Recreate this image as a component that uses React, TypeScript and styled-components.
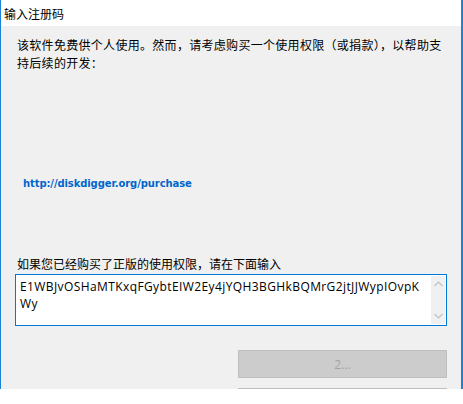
import React from "react";
import styled, { createGlobalStyle } from "styled-components";

const Global = createGlobalStyle`
  html, body { margin: 0; padding: 0; background: #ffffff; }
  body { font-family: "Noto Sans CJK SC", "Noto Sans", sans-serif; }
  * { box-sizing: border-box; }
`;

const Window = styled.div`
  width: 463px;
  height: 389px;
  border-left: 1px solid #1883d7;
  border-right: 2px solid #1883d7;
  display: flex;
  flex-direction: column;
  overflow: hidden;
  background: #f0f0f0;
`;

const TitleBar = styled.div`
  height: 26px;
  flex: none;
  background: #ffffff;
  display: flex;
  align-items: center;
  padding-left: 3px;
  font-size: 12px;
  color: #000000;
`;

const Body = styled.div`
  flex: 1;
  display: flex;
  flex-direction: column;
  padding: 10px 14px 0 14px;
`;

const Text = styled.p<{ $top?: number; $spacing?: number }>`
  margin: ${(p) => p.$top ?? 0}px 0 0 2px;
  font-size: 12px;
  line-height: 18px;
  color: #000000;
  letter-spacing: ${(p) => p.$spacing ?? 0}px;
`;

const Link = styled.a`
  display: block;
  margin: 104px 0 0 8px;
  font-family: "DejaVu Sans", sans-serif;
  font-weight: bold;
  font-size: 10px;
  letter-spacing: -0.1px;
  line-height: 16px;
  color: #0066cc;
  text-decoration: none;
`;

const KeyBox = styled.div`
  margin-top: 1px;
  height: 52px;
  border: 1px solid #0078d7;
  background: #ffffff;
  display: flex;
`;

const KeyText = styled.div`
  flex: 1;
  padding: 3px 0 0 4px;
  font-family: "Open Sans", "Noto Sans", sans-serif;
  font-size: 12px;
  letter-spacing: 0.4px;
  line-height: 17px;
  color: #000000;
  white-space: nowrap;
  overflow: hidden;
`;

const ScrollBar = styled.div`
  width: 14px;
  margin: 1px 1px 1px 0;
  background: #f0f0f0;
  display: flex;
  flex-direction: column;
  justify-content: space-between;
  align-items: center;
  padding: 5px 0 5px;
`;

const Buttons = styled.div`
  margin-top: 24px;
  display: flex;
  flex-direction: column;
  align-items: flex-end;
  gap: 10px;
`;

const Button = styled.button`
  width: 209px;
  height: 28px;
  flex: none;
  border: 1px solid #bfbfbf;
  background: #cccccc;
  color: #a3a3a3;
  font-family: "Open Sans", "Noto Sans", sans-serif;
  font-size: 12px;
  padding: 0;
`;

const Chevron = ({ up }: { up?: boolean }) => (
  <svg width="9" height="6" viewBox="0 0 9 6">
    <path
      d={up ? "M0.5 5 L4.5 1 L8.5 5" : "M0.5 1 L4.5 5 L8.5 1"}
      fill="none"
      stroke="#c2c2c2"
      strokeWidth="1.2"
    />
  </svg>
);

const key = "E1WBJvOSHaMTKxqFGybtEIW2Ey4jYQH3BGHkBQMrG2jtJJWypIOvpKWy";

export default function App() {
  return (
    <>
      <Global />
      <Window>
        <TitleBar>输入注册码</TitleBar>
        <Body>
          <Text $spacing={0.3}>
            该软件免费供个人使用。然而，请考虑购买一个使用权限（或捐款），以帮助支持后续的开发：
          </Text>
          <Link href="#">http://diskdigger.org/purchase</Link>
          <Text $top={63}>如果您已经购买了正版的使用权限，请在下面输入</Text>
          <KeyBox>
            <KeyText>
              {key.slice(0, 54)}
              <br />
              {key.slice(54)}
            </KeyText>
            <ScrollBar>
              <Chevron up />
              <Chevron />
            </ScrollBar>
          </KeyBox>
          <Buttons>
            <Button disabled>2...</Button>
            <Button disabled />
          </Buttons>
        </Body>
      </Window>
    </>
  );
}
